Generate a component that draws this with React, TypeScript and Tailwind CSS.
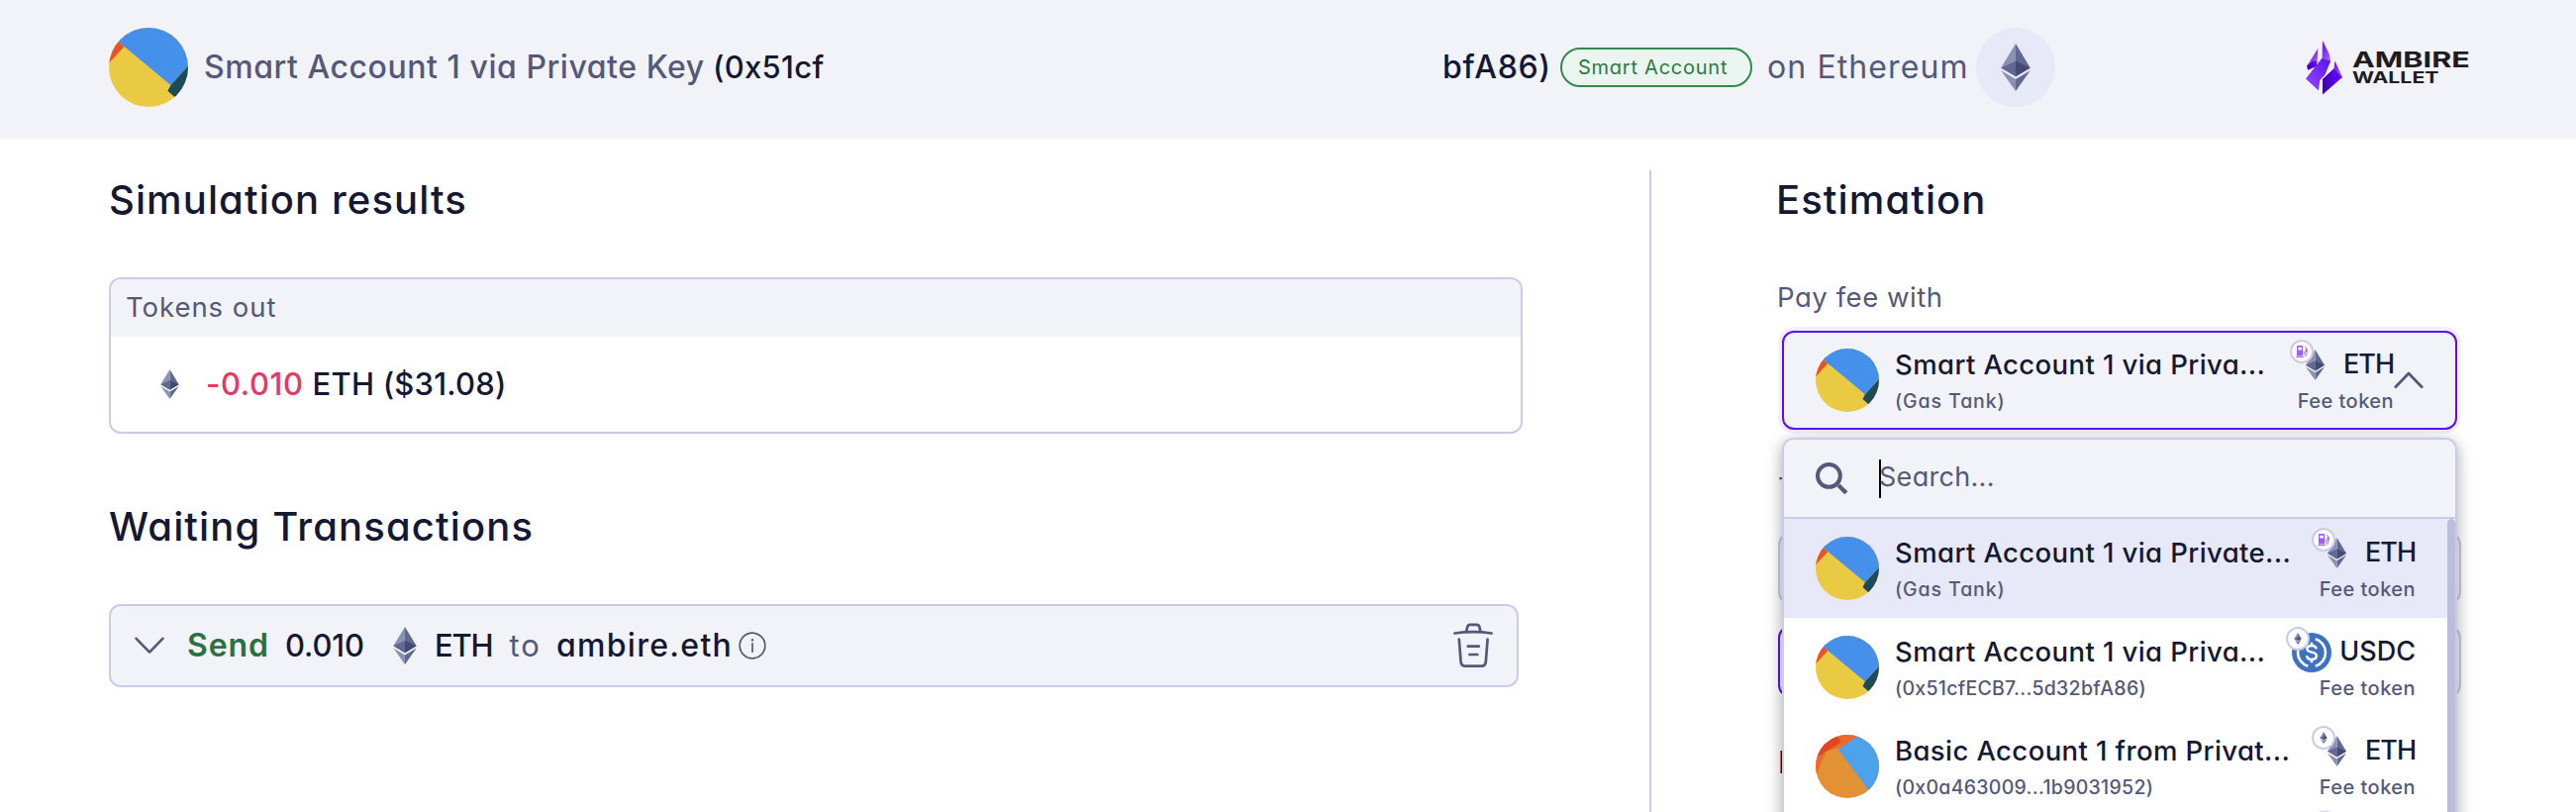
import React from "react";

type AvatarKind = "smart" | "basic";
type BadgeKind = "gas" | "eth";

interface FeeOption {
    name: string;
    detail: string;
    avatar: AvatarKind;
    badge: BadgeKind;
    token: "ETH" | "USDC";
}

const OPTIONS: FeeOption[] = [
    { name: "Smart Account 1 via Private...", detail: "(Gas Tank)", avatar: "smart", badge: "gas", token: "ETH" },
    { name: "Smart Account 1 via Priva...", detail: "(0x51cfECB7...5d32bfA86)", avatar: "smart", badge: "eth", token: "USDC" },
    { name: "Basic Account 1 from Privat...", detail: "(0x0a463009...1b9031952)", avatar: "basic", badge: "eth", token: "ETH" },
];

function EthGlyph({ className }: { className?: string }) {
    return (
        <svg viewBox="0 0 784 1277" className={className}>
            <path fill="#62688f" d="M392 0 L784 651 L392 882 Z" />
            <path fill="#8a92b2" d="M392 0 L0 651 L392 882 Z" />
            <path fill="#454a75" d="M392 472 L784 651 L392 882 Z" />
            <path fill="#62688f" d="M392 472 L0 651 L392 882 Z" />
            <path fill="#62688f" d="M392 956 L784 725 L392 1277 Z" />
            <path fill="#8a92b2" d="M392 956 L0 725 L392 1277 Z" />
        </svg>
    );
}

function UsdcIcon() {
    return (
        <svg viewBox="0 0 40 40" className="size-10" fill="none">
            <circle cx="20" cy="20" r="20" fill="#3e73c4" />
            <path d="M16.2 6.3 A14.3 14.3 0 0 0 16.2 33.7" stroke="#fff" strokeWidth="2.6" />
            <path d="M23.8 6.3 A14.3 14.3 0 0 1 23.8 33.7" stroke="#fff" strokeWidth="2.6" />
            <path
                d="M24.6 16.4 C24.4 14 22.6 12.9 20 12.9 C17.3 12.9 15.4 14.2 15.4 16.3 C15.4 21.2 24.9 18 24.9 23.3 C24.9 25.6 22.8 26.9 20 26.9 C17.2 26.9 15.2 25.7 15 23.2"
                stroke="#fff"
                strokeWidth="2.5"
            />
            <path d="M20 9.8 V13.2 M20 26.8 V30.2" stroke="#fff" strokeWidth="2.5" />
        </svg>
    );
}

function GasPump() {
    return (
        <svg viewBox="0 0 12 12" className="size-3">
            <path fill="#a15cf8" fillRule="evenodd" d="M1 0.8 Q1 0 1.8 0 H6.4 Q7.2 0 7.2 0.8 V10.6 H1 Z M2.3 1.8 V4.4 H5.9 V1.8 Z" />
            <rect x="0" y="11.1" width="8" height="0.9" fill="#a15cf8" />
            <path d="M9.2 1 L10.8 2.8 V9.4 Q10.6 10.6 9.6 10.4 Q8.8 10.2 8.9 9 V6.6 H7.4" fill="none" stroke="#a15cf8" strokeWidth="0.9" />
            <rect x="9.6" y="3.4" width="2" height="3.2" fill="#a15cf8" />
        </svg>
    );
}

function Avatar({ kind, className }: { kind: AvatarKind; className: string }) {
    return (
        <div className={`shrink-0 rounded-full overflow-hidden ${className}`}>
            {kind === "smart" ? (
                <svg viewBox="0 0 64 64" className="size-full">
                    <rect width="64" height="64" fill="#eac943" />
                    <path fill="#e85427" d="M0 4.8 L12.4 15.1 L0 28.5 Z M6 53.5 L17 64 L6 64 Z" />
                    <path fill="#4490eb" d="M0 4.8 L50 46.3 L64 31 V0 H0 Z" />
                    <path fill="#1f4b56" d="M50 46.3 L64 31 V64 H62 L47.5 51 Z" />
                </svg>
            ) : (
                <svg viewBox="0 0 64 64" className="size-full">
                    <rect width="64" height="64" fill="#e29234" />
                    <path fill="#eb6b2c" d="M0 42 L10.5 16.5 L28 12 L46 0 H0 Z" />
                    <path fill="#e24526" d="M0 23.5 L25.6 7.6 L20 -1 H0 Z" />
                    <path fill="#4ca2eb" d="M23 15 L43 0.5 H64 V64 H59.5 Z" />
                </svg>
            )}
        </div>
    );
}

function AmbireFlame() {
    return (
        <svg viewBox="0 0 37 55" className="w-[37px] h-[55px]">
            <defs>
                <linearGradient id="flameLight" x1="0" y1="1" x2="1" y2="0">
                    <stop offset="0.2" stopColor="#8b3dff" />
                    <stop offset="1" stopColor="#5b12f0" />
                </linearGradient>
                <linearGradient id="flameDark" x1="0" y1="0.8" x2="1" y2="0.4">
                    <stop offset="0" stopColor="#35009f" />
                    <stop offset="0.8" stopColor="#6000ff" />
                </linearGradient>
                <linearGradient id="flameTip" x1="0" y1="0" x2="0.6" y2="1">
                    <stop offset="0" stopColor="#5a0df0" />
                    <stop offset="1" stopColor="#a259ff" />
                </linearGradient>
            </defs>
            <path fill="url(#flameTip)" d="M12.3 8 L11.6 20.5 L5.5 21 L1 25.8 Z" />
            <path fill="url(#flameDark)" d="M1 25.6 L6.5 20.6 L11.6 20.5 L10.8 26 L2.2 29.8 Z" />
            <path fill="url(#flameTip)" d="M17 0 L23.5 13 L25.2 20.6 L16.6 17.6 Z" />
            <path fill="url(#flameLight)" d="M16.6 17.6 L25.2 20.4 L19.5 34.5 L14.2 40 L13 50.5 L0 38.5 Z" />
            <path fill="url(#flameTip)" d="M29.5 20.5 L37 37 L28.6 28.2 Z" />
            <path fill="url(#flameDark)" d="M28.6 28 L37 37 L17 54.5 V39 Z" />
        </svg>
    );
}

function Token({ token, badge }: { token: "ETH" | "USDC"; badge: BadgeKind }) {
    return (
        <div className="flex flex-col items-end shrink-0 whitespace-nowrap">
            <div className="flex items-center h-[41px] gap-2">
                <div className="relative flex items-center justify-center size-10">
                    {token === "USDC" ? <UsdcIcon /> : <EthGlyph className="h-[31px] w-[19px]" />}
                    <div className="absolute -left-1.5 -top-1.5 size-6 rounded-full border-2 border-[#cacbe6] bg-white flex items-center justify-center">
                        {badge === "gas" ? <GasPump /> : <EthGlyph className="h-3 w-[8px]" />}
                    </div>
                </div>
                {token === "USDC" ? (
                    <span className="text-[27px] font-medium tracking-[0.02px] text-[#141833]">USDC</span>
                ) : (
                    <span className="text-[27px] font-medium tracking-[-1px] text-[#141833]">ETH</span>
                )}
            </div>
            <span className="h-[31px] leading-[33px] text-[20px] font-medium tracking-[0.45px] text-[#54597a]">Fee token</span>
        </div>
    );
}

function AccountText({ name, detail }: { name: string; detail: string }) {
    const detailTracking = detail === "(Gas Tank)" ? "tracking-[0.9px]" : "tracking-[0.28px]";
    return (
        <div className="ml-4 flex-1 flex flex-col whitespace-nowrap">
            <span className="h-[41px] leading-[41px] text-[27.5px] font-medium tracking-[0.4px] text-[#141833]">{name}</span>
            <span className={`h-[31px] leading-[33px] text-[19.5px] font-medium text-[#54597a] ${detailTracking}`}>{detail}</span>
        </div>
    );
}

function Header() {
    return (
        <header className="h-[140px] bg-[#f2f3f8] flex items-center pl-[110px] pr-[106px] pb-1 text-[31px] whitespace-nowrap">
            <Avatar kind="smart" className="size-20" />
            <span className="ml-4 w-[514px] text-[32px] font-medium tracking-[0.55px] text-[#54597a]">Smart Account 1 via Private Key</span>
            <span className="w-[112px] overflow-hidden font-medium tracking-[0.3px] text-[#141833]">(0x51cf</span>
            <span className="ml-[625px] w-[119px] text-[32px] font-medium tracking-[0.7px] text-[#141833]">bfA86)</span>
            <span className="w-[194px] h-10 rounded-full border-2 border-[#35894f] bg-[#ebf5f0] pl-4 text-xl leading-9 tracking-[0.75px] text-[#2b7a45]">
                Smart Account
            </span>
            <span className="ml-[15px] w-[211px] text-[32px] tracking-[1.1px] text-[#54597a]">on Ethereum</span>
            <div className="size-20 rounded-full bg-[#e7e8f8] flex items-center justify-center">
                <EthGlyph className="h-[48px] w-[30px]" />
            </div>
            <div className="ml-auto flex items-center text-[#1f1c20]">
                <AmbireFlame />
                <div className="ml-2.5 w-[120px] flex flex-col items-start font-bold">
                    <span className="text-[22px] leading-[22px] origin-left scale-x-[1.39]">AMBIRE</span>
                    <span className="text-[15.5px] leading-4 origin-left scale-x-[1.37]">WALLET</span>
                </div>
            </div>
        </header>
    );
}

function Simulation() {
    return (
        <section className="w-[1666px] pl-[110px] pt-8">
            <h2 className="h-[60px] leading-[60px] text-[40px] font-medium tracking-[1.1px] text-[#141833]">Simulation results</h2>
            <div className="mt-12 w-[1428px] h-[158px] rounded-xl border-2 border-[#cacbe6] overflow-hidden">
                <div className="h-[58px] leading-[57px] bg-[#f2f3f8] pl-[15px] text-[27.5px] tracking-[0.95px] text-[#54597a]">Tokens out</div>
                <div className="h-24 flex items-center pl-[50px] text-[31px] font-medium text-[#141833]">
                    <EthGlyph className="h-[30px] w-[19px]" />
                    <span className="ml-[27px] tracking-[0.6px] text-[#ea3664]">-0.010</span>
                    <span className="ml-[9px] tracking-[0.2px]">ETH ($31.08)</span>
                </div>
            </div>

            <h2 className="mt-16 h-[60px] leading-[60px] text-[40px] font-medium tracking-[1.15px] text-[#141833]">Waiting Transactions</h2>
            <div className="mt-12 w-[1424px] h-[84px] rounded-xl border-2 border-[#cacbe6] bg-[#f2f3f8] flex items-center px-6 text-[31px] font-medium text-[#141833]">
                <svg viewBox="0 0 30 18" className="w-[30px] h-[18px]" fill="none" stroke="#54597a" strokeWidth="2.6" strokeLinecap="round" strokeLinejoin="round">
                    <path d="M1.6 1.8 L15 15.6 L28.4 1.8" />
                </svg>
                <span className="ml-[23px] text-[32px] font-semibold tracking-[0.9px] text-[#2b7043]">Send</span>
                <span className="ml-[16px] tracking-[-0.1px]">0.010</span>
                <EthGlyph className="ml-[29px] h-[38px] w-6" />
                <span className="ml-[18px] tracking-[-1.2px]">ETH</span>
                <span className="ml-[17px] font-normal tracking-[2px] text-[#54597a]">to</span>
                <span className="ml-[15px] text-[32px] tracking-[1.3px]">ambire.eth</span>
                <svg viewBox="0 0 28 28" className="ml-[6px] size-7" fill="none" stroke="#54597a" strokeWidth="1.7">
                    <circle cx="14" cy="14" r="12.8" />
                    <path d="M14 11.8 V20.2" strokeLinecap="round" />
                    <circle cx="14" cy="8.3" r="1.2" fill="#54597a" stroke="none" />
                </svg>
                <svg viewBox="0 0 40 46" className="ml-auto w-10 h-[46px]" fill="none" stroke="#54597a" strokeWidth="2.7" strokeLinecap="round" strokeLinejoin="round">
                    <path d="M1.4 10.5 Q20 7.9 38.6 10.5" />
                    <path d="M13.2 8.6 L14.2 4.2 Q14.8 1.8 17 1.8 H23.5 Q25.8 1.8 26.4 4.2 L27.4 8.6" />
                    <path d="M5.8 16.5 L7.6 39.5 Q8.2 43.7 12 43.7 H28.4 Q32.2 43.7 32.8 39.5 L34.6 16.5" />
                    <path d="M14.8 23.7 H25.8 M16.4 32 H24.4" />
                </svg>
            </div>
        </section>
    );
}

function FeeDropdown() {
    return (
        <div className="absolute top-[108px] left-0 w-full h-[500px] rounded-t-xl border-2 border-[#cacbe6] bg-white overflow-hidden shadow-[0_4px_16px_rgba(0,0,0,0.35)]">
            <div className="h-20 bg-[#f2f3f8] border-b-2 border-[#cacbe6] flex items-center pl-8">
                <svg viewBox="0 0 32 32" className="size-8" fill="none" stroke="#54597a">
                    <circle cx="13.4" cy="13.4" r="11.4" strokeWidth="4" />
                    <path d="M23 23 L30.8 30.8" strokeWidth="4.2" />
                </svg>
                <span className="ml-8 w-0.5 h-[39px] bg-black" />
                <span className="-ml-0.5 mb-0.5 text-[27px] tracking-[0.3px] text-[#54597a]">Search...</span>
            </div>
            <div className="flex">
                <div className="flex-1">
                    {OPTIONS.map((option, i) => (
                        <div key={option.detail} className={`h-[100px] flex items-center px-8 ${i === 0 ? "bg-[#e7e8f8]" : "bg-white"}`}>
                            <Avatar kind={option.avatar} className="size-16" />
                            <AccountText name={option.name} detail={option.detail} />
                            <Token token={option.token} badge={option.badge} />
                        </div>
                    ))}
                    {/* top of the next option's token badge */}
                    <div className="-mt-1.5 ml-[534px] size-6 rounded-full border-2 border-[#e4e5f3]" />
                </div>
                <div className="w-2 h-[420px] rounded-t-full bg-[#babedc]" />
            </div>
        </div>
    );
}

function Estimation() {
    return (
        <section className="flex-1 pt-8 pl-32 pr-[116px]">
            <h2 className="h-[60px] leading-[60px] text-[40px] font-medium tracking-[1.1px] text-[#141833] -ml-0.5">Estimation</h2>
            <div className="mt-12 h-10 leading-[41px] text-[27.5px] tracking-[0.55px] text-[#54597a] -ml-px">Pay fee with</div>
            <div className="relative mt-3.5 mx-1">
                <div className="h-[100px] rounded-xl border-2 border-[#5a0ff5] bg-[#f2f3f8] flex items-center px-8 shadow-[0_0_0_4px_#f3effd]">
                    <Avatar kind="smart" className="size-16" />
                    <AccountText name="Smart Account 1 via Priva..." detail="(Gas Tank)" />
                    <Token token="ETH" badge="gas" />
                    <svg viewBox="0 0 30 18" className="w-[30px] h-[18px] shrink-0" fill="none" stroke="#54597a" strokeWidth="2.8" strokeLinecap="round" strokeLinejoin="round">
                        <path d="M1.8 15.8 L15 2 L28.2 15.8" />
                    </svg>
                </div>
                <FeeDropdown />
            </div>

            <div className="mt-[39px] h-10 leading-10 text-[27px] text-[#54597a]">T</div>
            <div className="mt-[25px] h-[72px] rounded-xl border-2 border-[#cacbe6] bg-[#f2f3f8]" />
            <div className="mt-[22px] flex gap-4">
                <div className="flex-1 h-[72px] rounded-xl border-2 border-[#5a0ff5] bg-[#f2f3f8]" />
                <div className="flex-1 h-[72px] rounded-xl border-2 border-[#cacbe6] bg-[#f2f3f8]" />
            </div>
            <div className="mt-[46px] h-10 leading-10 text-[31px] font-medium text-[#141833]">F</div>
        </section>
    );
}

export default function App() {
    return (
        <div className="w-[2602px] h-[820px] overflow-hidden bg-white flex flex-col font-['Inter','Open_Sans',sans-serif] [font-feature-settings:'cv11']">
            <Header />
            <main className="flex-1 flex">
                <Simulation />
                <div className="w-0.5 mt-8 bg-[#cacbe6]" />
                <Estimation />
            </main>
        </div>
    );
}
